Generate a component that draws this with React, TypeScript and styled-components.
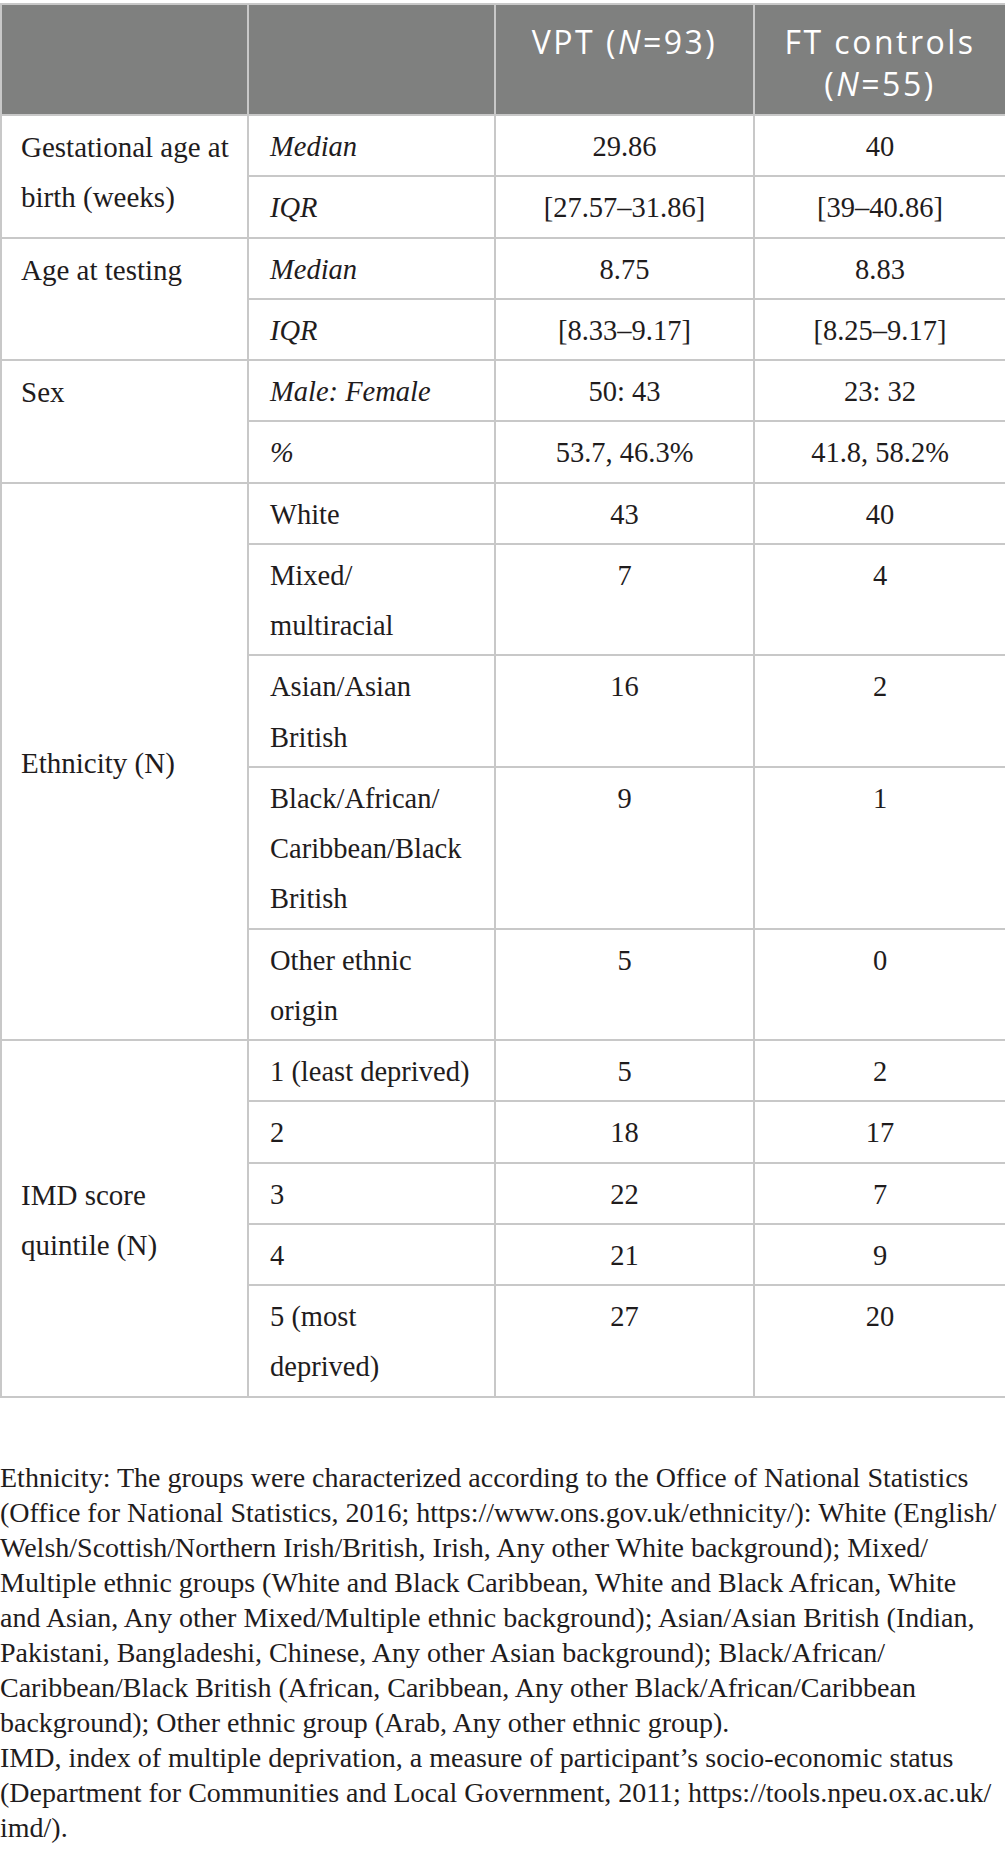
import React from "react";
import styled, { createGlobalStyle } from "styled-components";

const GlobalStyle = createGlobalStyle`
  html, body { margin: 0; padding: 0; background: #ffffff; }
  body { font-family: "Liberation Serif", "Times New Roman", serif; color: #1f1c1d; }
`;

const Page = styled.div`
  width: 1005px;
  padding-top: 3px;
`;

const Table = styled.table`
  width: 1005px;
  border-collapse: collapse;
  table-layout: fixed;
  border: 2px solid #c8c8c8;
`;

const HeadRow = styled.tr`
  background: #7f807f;
`;

const HeadCell = styled.th`
  border: 2px solid #c8c8c8;
  color: #ffffff;
  font-family: "Open Sans", "Noto Sans", sans-serif;
  font-weight: 400;
  font-size: 32px;
  letter-spacing: 2.5px;
  line-height: 42px;
  text-align: center;
  vertical-align: top;
  padding: 16px 6px 9px 6px;
  height: 84px;
  i { font-style: italic; }
`;

const Cell = styled.td<{ $align?: "top" | "middle" }>`
  border: 2px solid #c8c8c8;
  font-size: 29px;
  line-height: 50.25px;
  padding: 6px 10px 3px 19px;
  vertical-align: ${(p) => p.$align ?? "top"};
  text-align: left;
`;

const SubCell = styled(Cell)<{ $italic?: boolean }>`
  font-size: 28.5px;
  padding-left: 21px;
  font-style: ${(p) => (p.$italic ? "italic" : "normal")};
`;

const ValueCell = styled(Cell)`
  font-size: 28.5px;
  text-align: center;
  padding-left: 10px;
`;

const Notes = styled.div`
  margin-top: 62px;
  font-size: 28px;
  line-height: 35px;
  white-space: nowrap;
`;

const Note = styled.p`
  margin: 0;
`;

type Row = { label: React.ReactNode; italic?: boolean; a: string; b: string };
type Group = { title: React.ReactNode; align: "top" | "middle"; rows: Row[] };

const groups: Group[] = [
  {
    title: (
      <>
        Gestational age at
        <br />
        birth (weeks)
      </>
    ),
    align: "top",
    rows: [
      { label: "Median", italic: true, a: "29.86", b: "40" },
      { label: "IQR", italic: true, a: "[27.57–31.86]", b: "[39–40.86]" },
    ],
  },
  {
    title: "Age at testing",
    align: "top",
    rows: [
      { label: "Median", italic: true, a: "8.75", b: "8.83" },
      { label: "IQR", italic: true, a: "[8.33–9.17]", b: "[8.25–9.17]" },
    ],
  },
  {
    title: "Sex",
    align: "top",
    rows: [
      { label: "Male: Female", italic: true, a: "50: 43", b: "23: 32" },
      { label: "%", italic: true, a: "53.7, 46.3%", b: "41.8, 58.2%" },
    ],
  },
  {
    title: "Ethnicity (N)",
    align: "middle",
    rows: [
      { label: "White", a: "43", b: "40" },
      {
        label: (
          <>
            Mixed/
            <br />
            multiracial
          </>
        ),
        a: "7",
        b: "4",
      },
      {
        label: (
          <>
            Asian/Asian
            <br />
            British
          </>
        ),
        a: "16",
        b: "2",
      },
      {
        label: (
          <>
            Black/African/
            <br />
            Caribbean/Black
            <br />
            British
          </>
        ),
        a: "9",
        b: "1",
      },
      {
        label: (
          <>
            Other ethnic
            <br />
            origin
          </>
        ),
        a: "5",
        b: "0",
      },
    ],
  },
  {
    title: (
      <>
        IMD score
        <br />
        quintile (N)
      </>
    ),
    align: "middle",
    rows: [
      { label: "1 (least deprived)", a: "5", b: "2" },
      { label: "2", a: "18", b: "17" },
      { label: "3", a: "22", b: "7" },
      { label: "4", a: "21", b: "9" },
      {
        label: (
          <>
            5 (most
            <br />
            deprived)
          </>
        ),
        a: "27",
        b: "20",
      },
    ],
  },
];

const ethnicityNote = [
  "Ethnicity: The groups were characterized according to the Office of National Statistics",
  "(Office for National Statistics, 2016; https://www.ons.gov.uk/ethnicity/): White (English/",
  "Welsh/Scottish/Northern Irish/British, Irish, Any other White background); Mixed/",
  "Multiple ethnic groups (White and Black Caribbean, White and Black African, White",
  "and Asian, Any other Mixed/Multiple ethnic background); Asian/Asian British (Indian,",
  "Pakistani, Bangladeshi, Chinese, Any other Asian background); Black/African/",
  "Caribbean/Black British (African, Caribbean, Any other Black/African/Caribbean",
  "background); Other ethnic group (Arab, Any other ethnic group).",
];

const imdNote = [
  "IMD, index of multiple deprivation, a measure of participant’s socio-economic status",
  "(Department for Communities and Local Government, 2011; https://tools.npeu.ox.ac.uk/",
  "imd/).",
];

const Lines = ({ lines }: { lines: string[] }) => (
  <>
    {lines.map((l, i) => (
      <React.Fragment key={i}>
        {i > 0 && <br />}
        {l}
      </React.Fragment>
    ))}
  </>
);

export default function App() {
  return (
    <Page>
      <GlobalStyle />
      <Table>
        <colgroup>
          <col style={{ width: "247px" }} />
          <col style={{ width: "247px" }} />
          <col style={{ width: "259px" }} />
          <col style={{ width: "252px" }} />
        </colgroup>
        <thead>
          <HeadRow>
            <HeadCell />
            <HeadCell />
            <HeadCell>
              VPT (<i>N</i>=93)
            </HeadCell>
            <HeadCell>
              FT controls
              <br />(<i>N</i>=55)
            </HeadCell>
          </HeadRow>
        </thead>
        <tbody>
          {groups.map((g, gi) =>
            g.rows.map((r, ri) => (
              <tr key={`${gi}-${ri}`}>
                {ri === 0 && (
                  <Cell rowSpan={g.rows.length} $align={g.align}>
                    {g.title}
                  </Cell>
                )}
                <SubCell $italic={r.italic}>{r.label}</SubCell>
                <ValueCell>{r.a}</ValueCell>
                <ValueCell>{r.b}</ValueCell>
              </tr>
            ))
          )}
        </tbody>
      </Table>
      <Notes>
        <Note>
          <Lines lines={ethnicityNote} />
        </Note>
        <Note>
          <Lines lines={imdNote} />
        </Note>
      </Notes>
    </Page>
  );
}
